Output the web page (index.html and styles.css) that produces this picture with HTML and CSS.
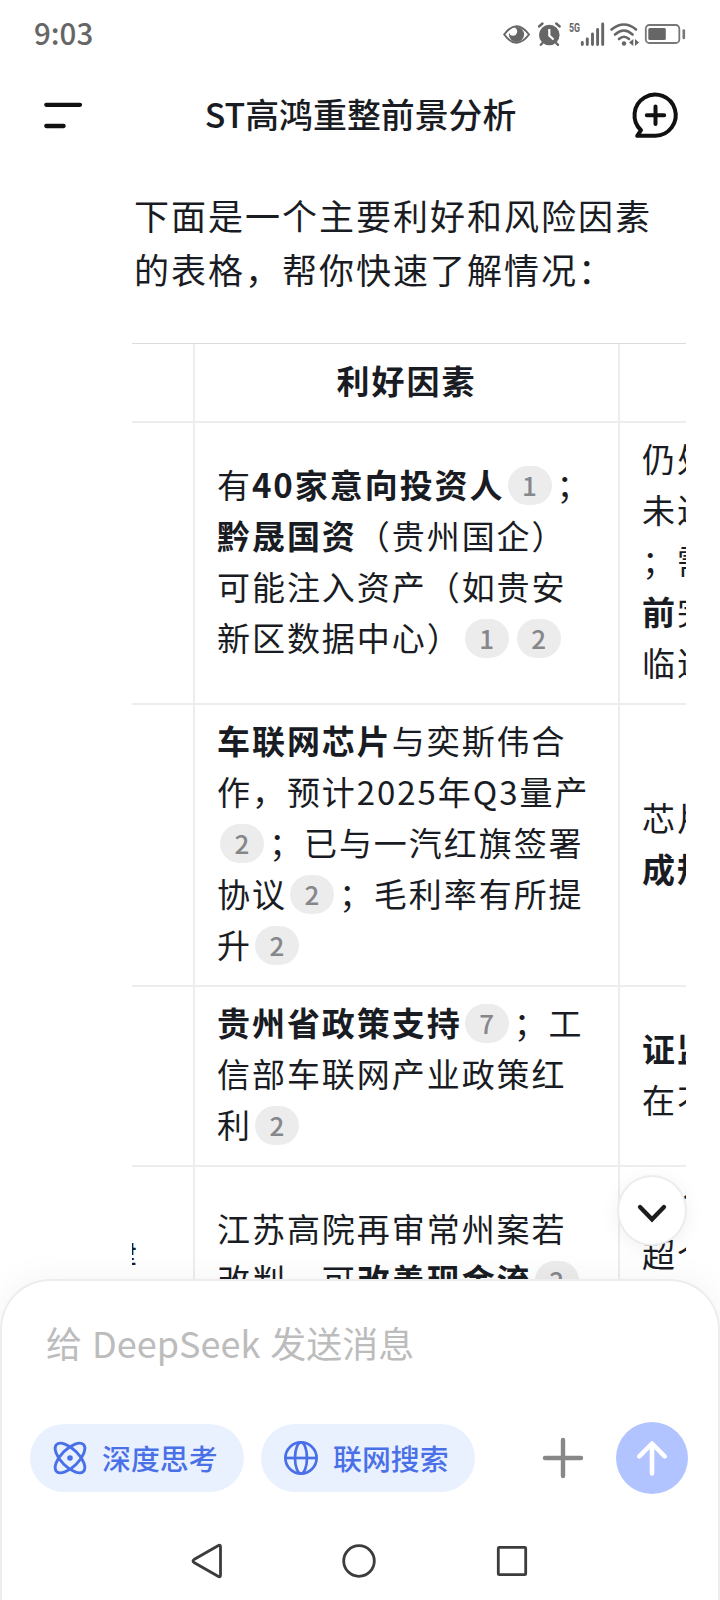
FILE: index.html
```html
<!DOCTYPE html>
<html lang="zh-CN">
<head>
    <meta charset="UTF-8">
    <title>ST高鸿重整前景分析</title>
    <link rel="stylesheet" href="styles.css">
</head>
<body>
<div id="app">

    <!--状态栏-->
    <div class="status">
        <span class="time">9:03</span>
        <svg class="status-icons" width="184" height="26" viewBox="0 0 184 26">
            <!--护眼-->
            <circle cx="13.500" cy="12.500" r="7.600" fill="#666"/>
            <circle cx="10" cy="9.500" r="4.200" fill="#fff"/>
            <path d="M1.200 12.500Q13.500 -4 26 12.500Q13.500 29 1.200 12.500Z" fill="none" stroke="#666" stroke-width="2"/>
            <!--闹钟-->
            <circle cx="46.300" cy="13" r="10.300" fill="#666"/>
            <path d="M36 4.500L39.500 1.500M53.200 1.500L56.700 4.500M39.500 21L37.800 22.800M53.200 21L55 22.800" stroke="#666" stroke-width="2.400" stroke-linecap="round"/>
            <path d="M46.300 7V13.500L50.500 17.500" fill="none" stroke="#fff" stroke-width="2.200"/>
            <!--信号-->
            <text x="66" y="10" class="net" textLength="11" lengthAdjust="spacingAndGlyphs">5G</text>
            <path d="M79.300 20.500V22.500M84.300 17V22.500M89.500 12V22.500M94.600 7.500V22.500M99.700 2V22.500" stroke="#666" stroke-width="2.900" stroke-linecap="round"/>
            <!--wifi-->
            <path d="M108.500 7.500Q121 -2.500 133 7.500M112 12.500Q121 4.500 129.500 12.500M116 17Q121 12.500 126 17" fill="none" stroke="#666" stroke-width="2.600" stroke-linecap="round"/>
            <circle cx="121" cy="21.500" r="2.200" fill="#666"/>
            <path d="M130.300 17V24L126 20.500ZM132 17V24L136 20.500Z" fill="#666"/>
            <!--电池-->
            <rect x="142.800" y="3" width="33.500" height="18" rx="3.500" fill="none" stroke="#777" stroke-width="1.800"/>
            <rect x="145.300" y="6" width="17.500" height="12" rx="1.500" fill="#666"/>
            <path d="M180.800 8.500V16" stroke="#777" stroke-width="2.600" stroke-linecap="round"/>
        </svg>
    </div>

    <!--标题栏-->
    <div class="header">
        <svg class="menu" width="40" height="28" viewBox="0 0 40 28">
            <path d="M2.300 2.800H36M2.300 24H19.600" stroke="#111" stroke-width="4.300" stroke-linecap="round"/>
        </svg>
        <h1 class="title">ST高鸿重整前景分析</h1>
        <svg class="new-chat" width="48" height="48" viewBox="0 0 48 48">
            <path d="M5.200 43.800H23.500A20.600 20.600 0 1 0 9 38.200Z" fill="none" stroke="#111" stroke-width="4" stroke-linejoin="round"/>
            <path d="M23.500 14.600V32M14.800 23.300H32.200" stroke="#111" stroke-width="4" stroke-linecap="round"/>
        </svg>
    </div>

    <!--回答内容-->
    <div class="content">
        <p class="intro">下面是一个主要利好和风险因素<br>的表格，帮你快速了解情况：</p>

        <div class="table-wrap">
            <div class="table">
                <div class="row head">
                    <div class="cell first"></div>
                    <div class="cell good"><b>利好因素</b></div>
                    <div class="cell risk"></div>
                </div>
                <div class="row">
                    <div class="cell first"></div>
                    <div class="cell good">
                        <div>有<b>40家意向投资人</b><i>1</i>；<br><b>黔晟国资</b>（贵州国企）<br>可能注入资产（如贵安<br>新区数据中心）<i>1</i><i>2</i></div>
                    </div>
                    <div class="cell risk">
                        <div>仍处<br>未进<br>；需<br><b>前</b>完<br>临退</div>
                    </div>
                </div>
                <div class="row">
                    <div class="cell first"></div>
                    <div class="cell good">
                        <div><b>车联网芯片</b>与奕斯伟合<br>作，预计2025年Q3量产<br><i>2</i>；已与一汽红旗签署<br>协议<i>2</i>；毛利率有所提<br>升<i>2</i></div>
                    </div>
                    <div class="cell risk">
                        <div>芯片<br><b>成规</b></div>
                    </div>
                </div>
                <div class="row">
                    <div class="cell first"></div>
                    <div class="cell good">
                        <div><b>贵州省政策支持</b><i>7</i>；工<br>信部车联网产业政策红<br>利<i>2</i></div>
                    </div>
                    <div class="cell risk">
                        <div><b>证监</b><br>在不</div>
                    </div>
                </div>
                <div class="row">
                    <div class="cell first last"><div>法律</div></div>
                    <div class="cell good">
                        <div>江苏高院再审常州案若<br>改判，可<b>改善现金流</b><i>2</i></div>
                    </div>
                    <div class="cell risk">
                        <div>若令<br>超个<br>亿元</div>
                    </div>
                </div>
            </div>
        </div>
    </div>

    <!--回到底部-->
    <div class="to-bottom">
        <svg width="32" height="20" viewBox="0 0 32 20">
            <path d="M4 5L16 17.300L28 5" fill="none" stroke="#1c1c1c" stroke-width="4.300" stroke-linecap="round" stroke-linejoin="miter"/>
        </svg>
    </div>

    <!--输入框-->
    <div class="panel">
        <div class="placeholder">给 DeepSeek 发送消息</div>
        <div class="tools">
            <div class="pill">
                <svg width="36" height="36" viewBox="0 0 36 36" fill="none" stroke="#4a70e8" stroke-width="2.900">
                    <ellipse cx="18" cy="18" rx="19" ry="8.800" transform="rotate(45 18 18)"/>
                    <ellipse cx="18" cy="18" rx="19" ry="8.800" transform="rotate(-45 18 18)"/>
                    <circle cx="18" cy="18" r="2.800" fill="#4a70e8" stroke="none"/>
                </svg>
                <span>深度思考</span>
            </div>
            <div class="pill web">
                <svg width="36" height="36" viewBox="0 0 36 36" fill="none" stroke="#4a70e8" stroke-width="2.700">
                    <circle cx="18" cy="18" r="15.600"/>
                    <ellipse cx="18" cy="18" rx="6" ry="15.600"/>
                    <path d="M2.400 18H33.600"/>
                </svg>
                <span>联网搜索</span>
            </div>
            <svg class="plus" width="42" height="42" viewBox="0 0 42 42">
                <path d="M21 3V39M3 21H39" stroke="#888" stroke-width="4.400" stroke-linecap="round"/>
            </svg>
            <div class="send">
                <svg width="34" height="38" viewBox="0 0 34 38">
                    <path d="M17 34.500V5M4.300 17.300L17 4.500L29.700 17.300" fill="none" stroke="#fff" stroke-width="4.600" stroke-linecap="round" stroke-linejoin="round"/>
                </svg>
            </div>
        </div>
        <div class="nav">
            <svg width="36" height="36" viewBox="0 0 36 36"><path d="M30 2.800Q32.500 1.200 32.500 4V32Q32.500 34.800 30 33.200L6 19.500Q4 18 6 16.500Z"/></svg>
            <svg width="36" height="36" viewBox="0 0 36 36"><circle cx="18" cy="18" r="15.300"/></svg>
            <svg width="36" height="36" viewBox="0 0 36 36"><rect x="4.300" y="4.300" width="27.400" height="27.400" rx="1"/></svg>
        </div>
    </div>

</div>
</body>
</html>
```
FILE: styles.css
```css
*{
    margin: 0;
    padding: 0;
    box-sizing: border-box;
}

body{
    background: #fff;
    color: #1a1c24;
    font-family: "Noto Sans CJK SC", "Noto Sans", sans-serif;
    text-spacing-trim: space-all;
}
svg{
    display: block;
    flex: none;
    overflow: visible;
}
i{
    font-style: normal;
}

#app{
    position: relative;
    width: 720px;
    height: 1600px;
    overflow: hidden;
    display: flex;
    flex-direction: column;
}

/*状态栏*/
.status{
    height: 68px;
    padding: 0 33px 0 34px;
    display: flex;
    align-items: center;
    justify-content: space-between;
}
.time{
    font-size: 29.5px;
    font-weight: 500;
    color: #666;
    line-height: 64px;
    padding-bottom: 4px;
}
.status-icons{
    margin-top: 1px;
}
.net{
    font: bold 12px "Roboto", sans-serif;
    fill: #666;
}

/*标题栏*/
.header{
    height: 96px;
    padding: 0 40px 0 44px;
    display: flex;
    align-items: center;
    justify-content: space-between;
}
.title{
    font-size: 33.9px;
    font-weight: 500;
    line-height: 50px;
    padding: 0 0 5px 5px;
}

/*内容*/
.content{
    height: 1115px;
    flex: none;
    padding: 24px 34px 0 132px;
    overflow: hidden;
}
.intro{
    font-size: 35px;
    letter-spacing: 2px;
    line-height: 54px;
    padding-left: 2px;
    white-space: nowrap;
}
.table-wrap{
    margin-top: 47px;
    overflow: hidden;
    border-top: 1px solid #dcdcdc;
}
.table{
    width: 800px;
    margin-left: -239px;
}
.row{
    display: flex;
    border-bottom: 2px solid #ededed;
}
.cell{
    flex: none;
    display: flex;
    align-items: center;
    min-height: 76px;
    padding: 10px 22px 15px;
    border-right: 2px solid #ededed;
    font-size: 33px;
    letter-spacing: 1.95px;
    line-height: 51px;
    white-space: nowrap;
}
.head .cell{
    height: 77px;
    justify-content: center;
}
.first{
    width: 302px;
    justify-content: flex-end;
}
.last{
    padding-right: 54px;
}
.good{
    width: 425px;
}
.risk{
    width: 400px;
}
.cell i{
    display: inline-block;
    width: 44px;
    height: 39px;
    margin: 0 5px 0 3px;
    border-radius: 20px;
    background: #ececec;
    color: #85878b;
    font-size: 26px;
    font-weight: 500;
    letter-spacing: 0;
    line-height: 38px;
    text-align: center;
    vertical-align: 2px;
}

/*回到底部按钮*/
.to-bottom{
    position: absolute;
    left: 617px;
    top: 1175px;
    width: 70px;
    height: 71px;
    border: 2px solid #ececec;
    border-radius: 50%;
    background: #fff;
    box-shadow: 0 4px 20px rgba(0,0,0,0.06);
    display: flex;
    align-items: center;
    justify-content: center;
    padding-top: 3px;
}

/*底部输入*/
.panel{
    position: relative;
    height: 321px;
    flex: none;
    border: 2px solid #ededed;
    border-bottom: 0;
    border-radius: 50px 50px 0 0;
    background: #fff;
    box-shadow: 0 0 36px rgba(0,0,0,0.05);
    padding: 34px 30px 0 28px;
}
.placeholder{
    padding-left: 16px;
    font-size: 36px;
    word-spacing: 2px;
    line-height: 54px;
    color: #bcbcbc;
}
.tools{
    margin-top: 53px;
    height: 72px;
    display: flex;
    align-items: center;
}
.pill{
    width: 214px;
    height: 68px;
    padding-left: 22px;
    display: flex;
    align-items: center;
    gap: 14px;
    border-radius: 34px;
    background: #eaf1fe;
    color: #4a70e8;
    font-size: 28.9px;
    font-weight: 500;
}
.pill span{
    padding-bottom: 3px;
}
.web{
    margin-left: 17px;
}
.plus{
    margin-left: 67px;
}
.send{
    width: 72px;
    height: 72px;
    margin-left: auto;
    border-radius: 50%;
    background: #b2c4ff;
    display: flex;
    align-items: center;
    justify-content: center;
}
.nav{
    margin-top: 49px;
    padding: 0 158px 0 158px;
    display: flex;
    justify-content: space-between;
}
.nav svg{
    fill: none;
    stroke: #3c3c3c;
    stroke-width: 2.8;
}
```
